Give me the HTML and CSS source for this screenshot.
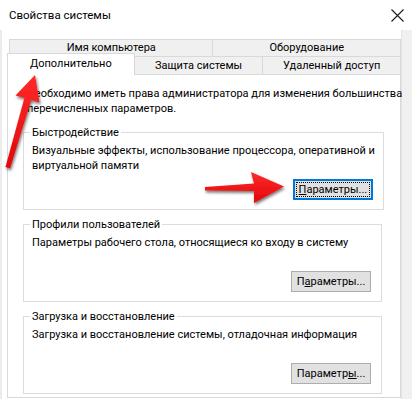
FILE: index.html
```html
<!DOCTYPE html>
<html lang="ru">
<head>
    <meta charset="UTF-8">
    <title>Свойства системы</title>
    <link rel="stylesheet" href="styles.css">
</head>
<body>
    <div class="window">
        <div class="titlebar">
            <span class="title">Свойства системы</span>
            <svg class="close" width="13" height="13" viewBox="0 0 13 13">
                <path d="M0.5 0.5 L12.5 12.5 M12.5 0.5 L0.5 12.5" stroke="#1a1a1a" stroke-width="1.1" fill="none"/>
            </svg>
        </div>

        <div class="dialog">
            <div class="tab-row back">
                <div class="tab t-name">Имя компьютера</div>
                <div class="tab t-hw">Оборудование</div>
            </div>
            <div class="tab-row front">
                <div class="tab active">Дополнительно</div>
                <div class="tab t-prot">Защита системы</div>
                <div class="tab t-remote">Удаленный доступ</div>
            </div>

            <div class="page">
                <p class="note">Необходимо иметь права администратора для изменения большинства<br>перечисленных параметров.</p>

                <fieldset class="group">
                    <legend>Быстродействие</legend>
                    <p class="desc">Визуальные эффекты, использование процессора, оперативной и<br>виртуальной памяти</p>
                    <div class="actions"><button class="btn focused"><span class="focus-ring"><u>П</u>араметры...</span></button></div>
                </fieldset>

                <fieldset class="group">
                    <legend>Профили пользователей</legend>
                    <p class="desc">Параметры рабочего стола, относящиеся ко входу в систему</p>
                    <div class="actions"><button class="btn">П<u>а</u>раметры...</button></div>
                </fieldset>

                <fieldset class="group">
                    <legend>Загрузка и восстановление</legend>
                    <p class="desc">Загрузка и восстановление системы, отладочная информация</p>
                    <div class="actions"><button class="btn">Параметр<u>ы</u>...</button></div>
                </fieldset>
            </div>
        </div>

        <!-- red pointer arrows drawn over the screenshot -->
        <svg class="arrows" width="412" height="399" viewBox="0 0 412 399">
            <defs>
                <filter id="shadow" x="-20%" y="-20%" width="140%" height="140%">
                    <feDropShadow dx="1" dy="2" stdDeviation="1.4" flood-color="#000" flood-opacity="0.55"/>
                </filter>
                <linearGradient id="red" x1="0" y1="0" x2="0" y2="1">
                    <stop offset="0" stop-color="#ff2a2a"/>
                    <stop offset="1" stop-color="#e00808"/>
                </linearGradient>
            </defs>
            <polygon filter="url(#shadow)" fill="url(#red)"
                points="35,75 39.5,102.5 31.2,100 10,168.5 5.5,167 24.4,98 15.5,95.5"/>
            <polygon filter="url(#shadow)" fill="url(#red)"
                points="205,187 254,183.5 251,172 284,186.5 254,203 254,191 205,190.5"/>
        </svg>
    </div>
</body>
</html>
```

FILE: styles.css
```css
body {
    margin: 0;
    font-family: Roboto, "Segoe UI", sans-serif;
    font-size: 11px;
    color: #000;
}
.window {
    position: relative;
    width: 412px;
    height: 399px;
    background-color: #f0f0f0;
    overflow: hidden;
}
.titlebar {
    height: 30px;
    display: flex;
    align-items: center;
    justify-content: space-between;
    padding: 0 8px 0 9px;
    background-color: #fff;
}
.title {
    font-size: 11.5px;
    margin-top: -1px;
}
.dialog {
    width: 402px;
    height: 369px;
    padding: 9px 0 0 5px;
    box-sizing: border-box;
    background-color: #fff;
    border-left: 2px solid #ececec;
    border-right: 1px solid #e3e3e3;
}
.tab-row {
    display: flex;
    align-items: flex-start;
}
.tab-row.back {
    margin-left: 2px;
    height: 17px;
}
.tab-row.front {
    height: 18px;
}
.tab {
    box-sizing: border-box;
    border: 1px solid #d9d9d9;
    border-bottom: none;
    background-color: #f0f0f0;
    text-align: center;
    white-space: nowrap;
}
.back .tab {
    height: 17px;
    line-height: 16px;
}
.front .tab {
    height: 18px;
    line-height: 17px;
}
.tab + .tab {
    margin-left: -1px;
}
.t-name { width: 205px; }
.t-hw { width: 189px; }
.t-prot { width: 130px; }
.t-remote { width: 139px; }
.front .tab.active {
    position: relative;
    z-index: 1;
    width: 128px;
    height: 22px;
    margin-top: -3px;
    padding-top: 1px;
    background-color: #fff;
}
.page {
    height: 324px;
    box-sizing: border-box;
    padding: 11px 18px 0 15px;
    border: 1px solid #d9d9d9;
    background-color: #fff;
}
.note {
    margin: 0 0 9px 4px;
    line-height: 15px;
    white-space: nowrap;
}
.group {
    margin: 0 0 7px;
    padding: 0 8px 9px;
    border: 1px solid #dcdcdc;
}
.group legend {
    padding: 0 2px;
    margin-left: -2px;
    line-height: 15px;
}
.desc {
    margin: 3px 0 0;
    min-height: 30px;
    line-height: 15px;
    white-space: nowrap;
}
.actions {
    display: flex;
    justify-content: flex-end;
    margin-top: 6px;
    padding-right: 2px;
}
.btn {
    width: 80px;
    height: 21px;
    padding: 0;
    font-family: inherit;
    font-size: 11px;
    color: #000;
    background-color: #e1e1e1;
    border: 1px solid #adadad;
    border-radius: 0;
}
.btn.focused {
    border: 2px solid #0078d7;
    padding: 1px;
}
.focus-ring {
    display: flex;
    align-items: center;
    justify-content: center;
    height: 100%;
    box-sizing: border-box;
    border: 1px dotted #000;
}
.arrows {
    position: absolute;
    left: 0;
    top: 0;
    pointer-events: none;
}
```
